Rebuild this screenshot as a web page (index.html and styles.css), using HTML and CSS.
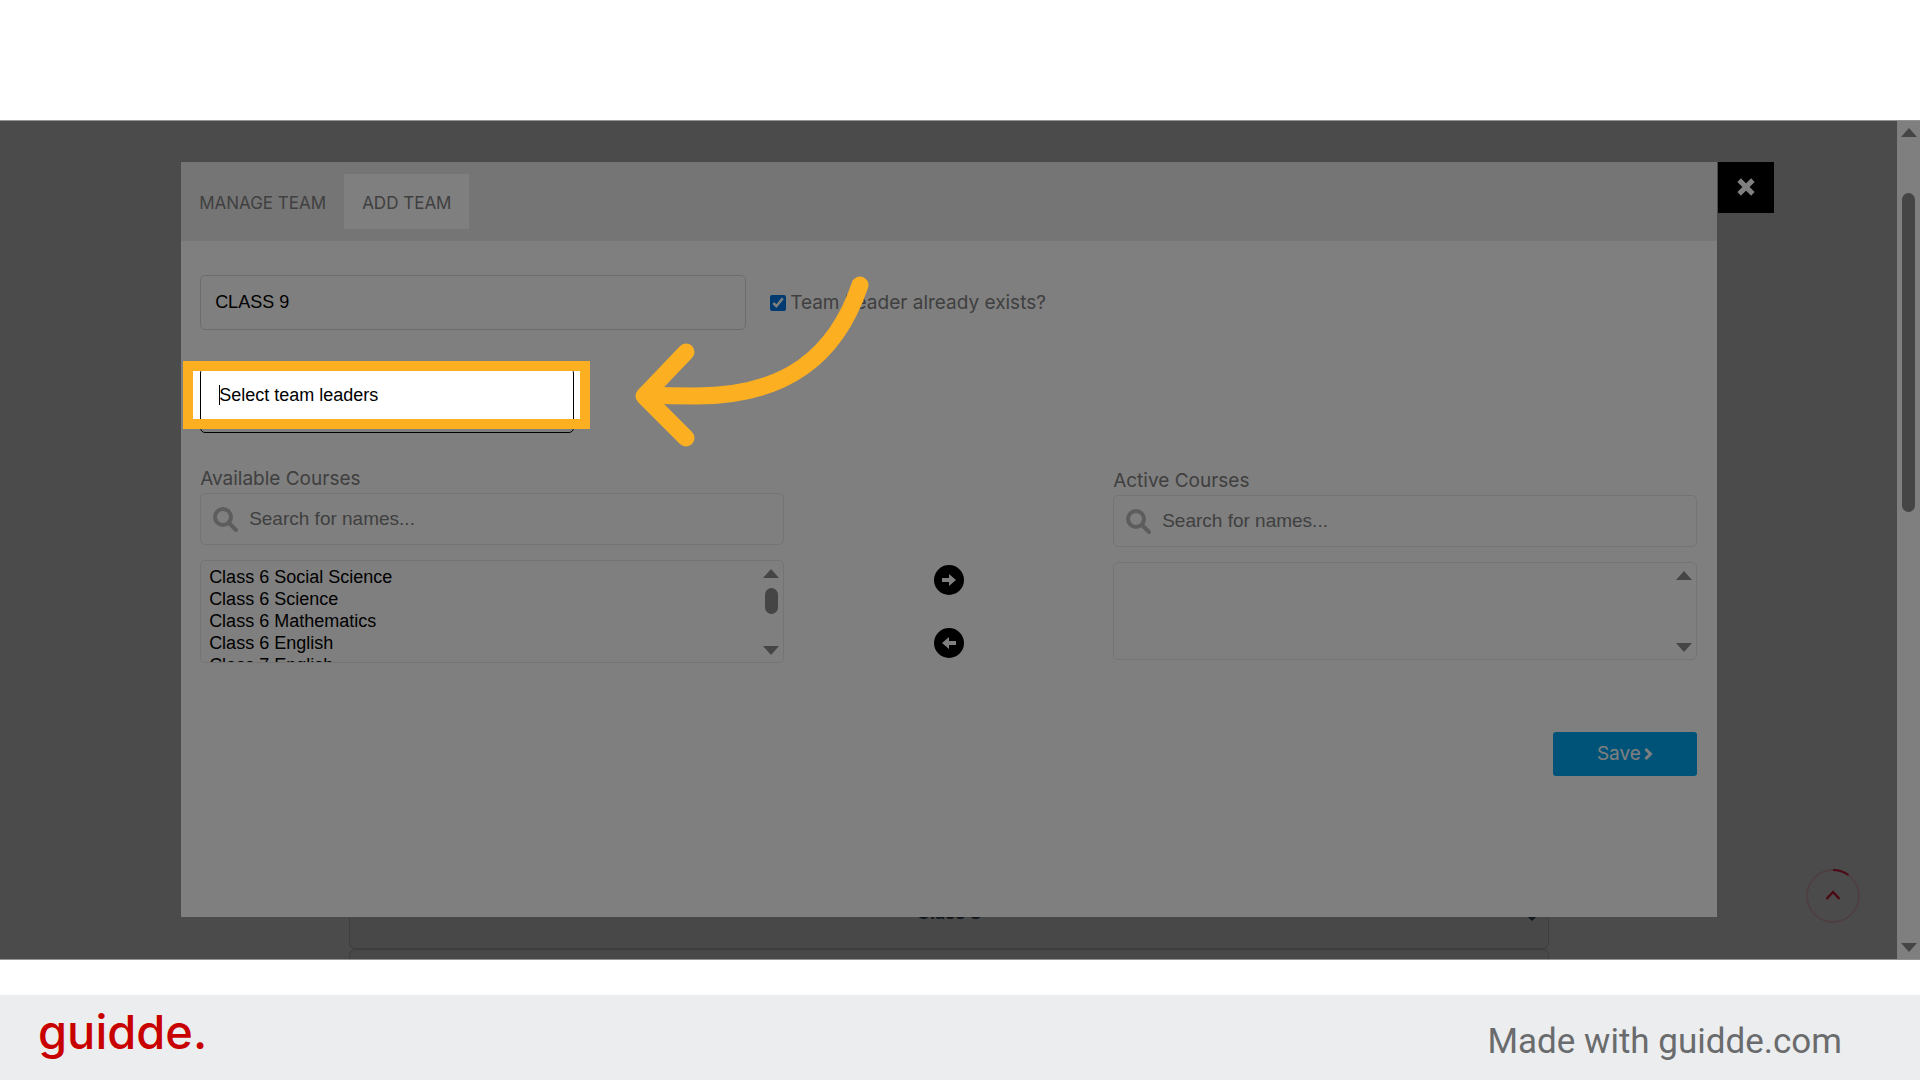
FILE: index.html
```html
<!DOCTYPE html>
<html lang="en">
<head>
<meta charset="utf-8">
<title>Add Team</title>
<link rel="stylesheet" href="styles.css">
</head>
<body>
<main class="stage">
  <div class="page">
    <div class="classes" aria-hidden="true">
      <div class="class-card"><span>Class 8</span><svg class="class-caret" width="8" height="8" viewBox="0 0 8 8"><path d="M0 0l4 4 4-4" fill="none" stroke="#24303a" stroke-width="3"/></svg></div>
      <div class="class-card"></div>
    </div>

    <section class="modal">
      <nav class="tabs">
        <button class="tab" type="button">MANAGE TEAM</button>
        <button class="tab tab-active" type="button">ADD TEAM</button>
      </nav>
      <button class="close" type="button" aria-label="Close">
        <svg width="20" height="20" viewBox="0 0 16 16"><path d="M2.500 2.500L13.500 13.500M13.500 2.500L2.500 13.500" stroke="#fff" stroke-width="4"/></svg>
      </button>

      <form class="form">
        <div class="name-row">
          <input class="field name-field" type="text" value="CLASS 9" aria-label="Team name">
          <input class="check" type="checkbox" id="leader" checked>
          <label for="leader">Team Leader already exists?</label>
        </div>

        <div class="leaders">
          <input class="field leaders-field" type="text" placeholder="Select team leaders" aria-label="Team leaders">
          <span class="text-caret"></span>
          <div class="spotlight"></div>
        </div>

        <div class="courses">
          <div class="course-col">
            <label class="course-label" for="available">Available Courses</label>
            <div class="search">
              <svg class="search-icon" width="26" height="26" viewBox="0 0 26 26"><circle cx="10" cy="10" r="8"/><path d="M16 16l7 7"/></svg>
              <input class="field search-field" type="text" placeholder="Search for names..." aria-label="Search available courses">
            </div>
            <div class="list">
              <select class="field list-field" id="available" multiple>
                <option>Class 6 Social Science</option>
                <option>Class 6 Science</option>
                <option>Class 6 Mathematics</option>
                <option>Class 6 English</option>
                <option>Class 7 English</option>
              </select>
              <div class="list-scroll"><i class="up"></i><i class="thumb"></i><i class="down"></i></div>
            </div>
          </div>

          <div class="move">
            <button class="move-button" type="button" aria-label="Add course">
              <svg width="30" height="30" viewBox="0 0 30 30"><circle cx="15" cy="15" r="15"/><path d="M8 13h7V9l7 6-7 6v-4H8z" fill="#fff"/></svg>
            </button>
            <button class="move-button" type="button" aria-label="Remove course">
              <svg width="30" height="30" viewBox="0 0 30 30"><circle cx="15" cy="15" r="15"/><path d="M22 13h-7V9l-7 6 7 6v-4h7z" fill="#fff"/></svg>
            </button>
          </div>

          <div class="course-col course-col-active">
            <label class="course-label" for="active">Active Courses</label>
            <div class="search">
              <svg class="search-icon" width="26" height="26" viewBox="0 0 26 26"><circle cx="10" cy="10" r="8"/><path d="M16 16l7 7"/></svg>
              <input class="field search-field" type="text" placeholder="Search for names..." aria-label="Search active courses">
            </div>
            <div class="list">
              <select class="field list-field" id="active" multiple></select>
              <div class="list-scroll"><i class="up"></i><i class="down"></i></div>
            </div>
          </div>
        </div>

        <div class="actions">
          <button class="save" type="button">Save<svg width="9" height="14" viewBox="0 0 9 14"><path d="M1.500 2l5 5-5 5" fill="none" stroke="#fff" stroke-width="3"/></svg></button>
        </div>
      </form>
    </section>

    <a class="to-top" href="#" aria-label="Back to top">
      <svg width="56" height="56" viewBox="0 0 56 56" fill="none"><circle cx="28" cy="28" r="26" stroke="#9c8083" stroke-width="2"/><path d="M28 2a26 26 0 0 1 15.500 5" stroke="#96122a" stroke-width="2"/><path d="M21.500 31l6.500-7 6.500 7" stroke="#96122a" stroke-width="2.500"/></svg>
    </a>
  </div>

  <div class="scrollbar"><i class="up"></i><i class="thumb"></i><i class="down"></i></div>

  <svg class="pointer" width="250" height="180" viewBox="630 270 250 180" fill="none" stroke="#fdaf22" stroke-width="17" stroke-linecap="round" stroke-linejoin="round" aria-hidden="true">
    <path d="M860 285C836 356 786 396 696 396Q670 396 645 395"/>
    <path d="M686 352L644 396L686 438"/>
  </svg>
</main>

<footer class="footer">
  <span class="logo">guidde.</span>
  <span class="made">Made with guidde.com</span>
</footer>
</body>
</html>
```
FILE: styles.css
```css
* { box-sizing: border-box; }

body {
  margin: 0;
  min-height: 100vh;
  padding-top: 120px;
  display: flex;
  flex-direction: column;
  background: #fff;
  color: #808080;
  font: 19px/24px Inter, sans-serif;
}

button, input, select { font: inherit; }
svg { display: block; }

.stage {
  flex: 1;
  position: relative;
  display: flex;
  overflow: hidden;
  border: solid #939393;
  border-width: 1px 0;
}

.page {
  flex: 1;
  position: relative;
  padding: 41px 0 0 1px;
  background: #979797;
}

/* class list behind the dialog */
.classes {
  position: absolute;
  left: 349px;
  right: 348px;
  bottom: -60px;
}
.class-card {
  display: flex;
  align-items: center;
  justify-content: center;
  position: relative;
  height: 70px;
  padding-bottom: 2px;
  background: #919191;
  border: 1px solid #7c7c7c;
  border-radius: 6px;
  color: #24303a;
  font-size: 18px;
  font-weight: 700;
}
.class-caret { position: absolute; right: 12px; bottom: 25px; }

/* dialog */
.modal {
  position: relative;
  width: 81%;
  margin: 0 auto;
  background: #fff;
}
.tabs {
  display: flex;
  height: 79px;
  padding: 12px 0;
  background: #ebebeb;
}
.tab {
  padding: 2px 18px 0;
  border: 0;
  background: none;
  color: #808080;
  font-size: 17px;
}
.tab-active { background: #fff; }

.close {
  position: absolute;
  top: 0;
  left: 100%;
  width: 56px;
  height: 51px;
  margin-left: 1px;
  padding: 0 0 2px;
  border: 0;
  background: #000;
  display: grid;
  place-items: center;
}

.form { padding: 34px 20px 141px 19px; }

.field {
  display: block;
  width: 100%;
  margin: 0;
  border: 1px solid #d9d9d9;
  border-radius: 5px;
  background: #fff;
  color: #000;
  font: 18px/24px "Liberation Sans", Arial, sans-serif;
  outline: 0;
}

.name-row { display: flex; align-items: center; }
.name-field { width: 546px; height: 55px; padding: 0 14px; }
.check { width: 16px; height: 16px; margin: 0 4px 0 24px; accent-color: #0075e0; }

.leaders { position: relative; z-index: 1; width: 374px; margin-top: 38px; }
.leaders-field { height: 65px; padding: 0 18px 11px; border-color: #000; }
.leaders-field::placeholder { color: #000; opacity: 1; }
.text-caret {
  position: absolute;
  left: 19px;
  top: 17px;
  width: 1px;
  height: 20px;
  background: #000;
}
/* dims everything outside the highlighted field */
.spotlight {
  position: absolute;
  inset: -7px -16px 4px -17px;
  border: 10px solid #fdaf22;
  box-shadow: 0 0 0 3000px rgba(0, 0, 0, .5);
  pointer-events: none;
}

.courses { display: flex; justify-content: space-between; margin-top: 34px; }
.course-col { width: 39%; }
.course-col-active { padding-top: 2px; }
.course-label { display: block; margin-bottom: 2px; }

.search { position: relative; margin-bottom: 15px; }
.search-icon {
  position: absolute;
  left: 13px;
  top: 14px;
  fill: none;
  stroke: #bbb;
  stroke-width: 4;
  stroke-linecap: round;
}
.search-field { height: 52px; padding: 0 48px; font-size: 19px; border-color: #e8e8e8; }
.search-field::placeholder { color: #808080; opacity: 1; }

.list { position: relative; }
.list-field {
  height: 103px;
  padding: 6px 7px 0;
  border-color: #e8e8e8;
  overflow: hidden;
  scrollbar-width: none;
}
.course-col-active .list-field { height: 98px; }
.list-field option { min-height: 22px; padding: 0 1px; line-height: 22px; }

.list-scroll {
  position: absolute;
  inset: 9px 5px 8px auto;
  width: 15px;
  display: flex;
  flex-direction: column;
  align-items: center;
}
.list-scroll .thumb { width: 13px; height: 26px; margin-top: 10px; }

.up, .down { border: solid transparent; border-width: 0 8px; }
.up { border-bottom: 9px solid #8a8a8a; }
.down { border-top: 9px solid #8a8a8a; margin-top: auto; }
.thumb { border-radius: 7px; background: #8a8a8a; }

.move { display: flex; flex-direction: column; gap: 33px; padding-top: 98px; }
.move-button { padding: 0; border: 0; border-radius: 50%; background: none; }

.actions { display: flex; justify-content: flex-end; margin-top: 69px; }
.save {
  display: flex;
  align-items: center;
  justify-content: center;
  gap: 3px;
  width: 144px;
  height: 44px;
  border: 0;
  border-radius: 3px;
  background: #00a6f0;
  color: #fff;
}

.to-top { position: absolute; right: 36px; bottom: 35px; }

.scrollbar {
  width: 23px;
  padding: 7px 0;
  display: flex;
  flex-direction: column;
  align-items: center;
  background: #fff;
}
.scrollbar .thumb { width: 13px; height: 319px; margin-top: 56px; }

.pointer { position: absolute; z-index: 2; left: 630px; top: 149px; }

.footer {
  display: flex;
  justify-content: space-between;
  align-items: center;
  height: 85px;
  margin-top: 35px;
  padding: 0 78px 0 38px;
  background: #ecedef;
}
.logo { padding-bottom: 12px; color: #c80000; font: 500 47px/60px Inter, sans-serif; }
.made { color: #6a6b6d; font: 35px/42px Roboto, sans-serif; padding-top: 8px; }
```
